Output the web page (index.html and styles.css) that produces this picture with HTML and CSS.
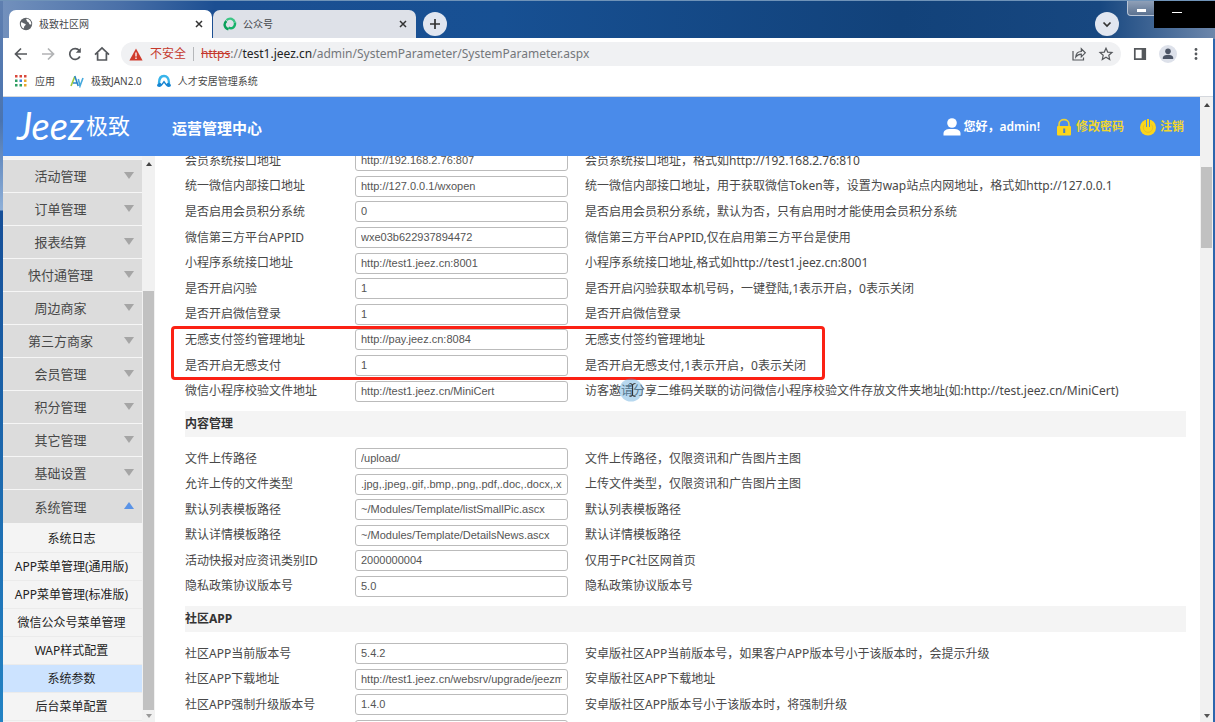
FILE: index.html
```html
<!DOCTYPE html>
<html lang="zh-CN">
<head>
<meta charset="utf-8">
<title>极致社区网</title>
<link rel="stylesheet" href="styles.css">
</head>
<body>
<div class="window">
  <div class="tabstrip">
    <div class="tab tab-active">
      <svg class="tab-icon" viewBox="0 0 14 14"><circle cx="7" cy="7" r="6.2" fill="#5f6368"/><path d="M2 5.2c2 .3 2.600 1.200 4 1.500 1.200.4.8 1.600-.2 2-.9.5-.5 2.300-1.400 2.900C2.500 10.500 1.500 8 2 5.200zM7.500 1.800c-.9 1 .3 1.300.5 2.200.2 1.200 1.900 1 2 2.300.2 1.100 1 1.500 2.300 1.200C12.600 4.200 10 1.700 7.500 1.800z" fill="#fff"/></svg>
      <span class="tab-title">极致社区网</span>
      <button class="tab-close" aria-label="关闭"><svg viewBox="0 0 8 8"><path d="M1 1l6 6M7 1L1 7"/></svg></button>
    </div>
    <div class="tab">
      <svg class="tab-icon" viewBox="0 0 14 14" fill="none" stroke-width="2.400"><path d="M5.500 12.300C1 11 .5 6.500 3.500 4" stroke="#0aa05a"/><path d="M3.500 3.200C7 .2 11 2 11.800 5.500" stroke="#3cc585"/><path d="M12 5.500C12.500 10 9 12.500 5.500 10.500" stroke="#17b26a"/></svg>
      <span class="tab-title">公众号</span>
      <button class="tab-close" aria-label="关闭"><svg viewBox="0 0 8 8"><path d="M1 1l6 6M7 1L1 7"/></svg></button>
    </div>
    <button class="round new-tab" aria-label="新标签页"><svg viewBox="0 0 12 12"><path d="M6 1v10M1 6h10"/></svg></button>
    <button class="round tab-search" aria-label="搜索标签页"><svg viewBox="0 0 12 12"><path d="M2.500 4.500L6 8l3.500-3.500"/></svg></button>
    <button class="win-min" aria-label="最小化"><span class="win-dash"></span></button>
  </div>

  <div class="toolbar">
    <button class="tool" aria-label="后退"><svg viewBox="0 0 16 16"><path d="M14 8H3M8 2.500L2.500 8 8 13.500"/></svg></button>
    <button class="tool tool-off" aria-label="前进"><svg viewBox="0 0 16 16"><path d="M2 8h11M8 2.500L13.500 8 8 13.500"/></svg></button>
    <button class="tool" aria-label="刷新"><svg viewBox="0 0 16 16"><path d="M12.900 10.500A5.400 5.400 0 1 1 12.300 4.500"/><path d="M13.800 1.800v5H8.800z" fill="#55585c" stroke="none"/></svg></button>
    <button class="tool" aria-label="主页"><svg viewBox="0 0 16 16"><path d="M1 8.600L8 2l7 6.600M3.600 7v7h8.800V7"/></svg></button>
    <div class="address">
      <svg class="warn" viewBox="0 0 14 13"><path d="M7 .6L13.600 12.400H.4z" fill="#d03b2c"/><path d="M7 4.600v3.800M7 9.400v1.500" stroke="#fff" stroke-width="1.300"/></svg>
      <span class="unsafe">不安全</span>
      <span class="sep"></span>
      <span class="url"><s class="scheme">https</s>://<b class="host">test1.jeez.cn</b>/admin/SystemParameter/SystemParameter.aspx</span>
      <button class="tool" aria-label="分享"><svg viewBox="0 0 16 16" class="thin"><path d="M2 5v9h10.500v-2.500M4.800 11C5 7.500 7 5.500 10.300 5.500V2.800l4 4-4 4V8.200C8 8.200 6.300 9 4.800 11z"/></svg></button>
      <button class="tool" aria-label="收藏"><svg viewBox="0 0 16 16" class="thin"><path d="M8 2.200l1.700 3.900 4.300.4-3.200 2.800.9 4.200L8 11.300l-3.700 2.200.9-4.200L2 6.500l4.300-.4z"/></svg></button>
    </div>
    <button class="tool panel" aria-label="侧边栏"><svg viewBox="0 0 16 16"><path d="M2.800 2.800h10.400v10.400H2.800z"/><path d="M10.500 2.800h2.700v10.400h-2.700z" fill="#55585c"/></svg></button>
    <button class="tool avatar" aria-label="用户"><svg viewBox="0 0 18 18"><circle cx="9" cy="6.200" r="2.800"/><path d="M3.800 14v-1.300c0-2 2.600-3 5.200-3s5.200 1 5.200 3V14z"/></svg></button>
    <button class="tool" aria-label="菜单"><svg viewBox="0 0 16 16"><g fill="#55585c" stroke="none"><circle cx="8" cy="3.500" r="1.400"/><circle cx="8" cy="8" r="1.400"/><circle cx="8" cy="12.500" r="1.400"/></g></svg></button>
  </div>

  <nav class="bookmarks">
    <a class="bookmark" href="#"><svg class="bm-icon" viewBox="0 0 14 14"><path d="M1 1h2.500v2.500H1zM5.500 1H8v2.500H5.500zM10 1h2.500v2.500H10z" fill="#d9473a"/><path d="M1 5.500h2.500V8H1zM1 10h2.500v2.500H1zM5.500 10H8v2.500H5.500z" fill="#2f9e62"/><path d="M5.500 5.500H8V8H5.500z" fill="#3b7de0"/><path d="M10 5.500h2.500V8H10zM10 10h2.500v2.500H10z" fill="#e8a72c"/></svg>应用</a>
    <a class="bookmark" href="#"><svg class="bm-icon" viewBox="0 0 14 14" fill="none" stroke-width="1.600"><path d="M1 12L4.800 2.500" stroke="#9cc83c"/><path d="M4.800 2l3.400 10M3 9h4" stroke="#2a86c8"/><path d="M8.300 5l1.700 7 3-8" stroke="#45a9dd"/></svg>极致JAN2.0</a>
    <a class="bookmark" href="#"><svg class="bm-icon" viewBox="0 0 14 14" fill="none"><path d="M2 9C2 4 4.500 2 7 2s5 2 5 7" stroke="#38b4ea" stroke-width="2.400"/><path d="M0 12c.5-3.500 3-4 4.500-2L7 6.500 9.500 10c1.500-2 4-1.500 4.500 2-2 1.500-4 1-5-.5L7 9l-2 2.500C4 13 2 13.500 0 12z" fill="#1685d2"/></svg>人才安居管理系统</a>
  </nav>

  <div class="viewport">
    <div class="app">
      <header class="header">
        <div class="logo"><span class="logo-en">Jeez</span><span class="logo-cn">极致</span></div>
        <h1 class="title">运营管理中心</h1>
        <div class="user">
          <span class="user-item"><svg class="u-icon" viewBox="0 0 18 18"><circle cx="9" cy="5" r="4.800" fill="#fff"/><path d="M.5 17.500v-2c0-3 3-4.300 5.300-4.500h6.400c2.300.2 5.300 1.500 5.300 4.500v2z" fill="#fff"/></svg>您好，admin!</span>
          <a class="user-item user-link" href="#"><svg class="u-icon" viewBox="0 0 18 18"><path d="M4 8V6.500C4 0 14 0 14 6.500V8" fill="none" stroke="#e8d03c" stroke-width="1.600"/><rect x="2" y="8" width="14" height="9.500" rx="1" fill="#fbd51c"/><path d="M8.200 10.500h2v4.500h-2z" fill="#4d7fbd"/></svg>修改密码</a>
          <a class="user-item user-link" href="#"><svg class="u-icon" viewBox="0 0 18 18"><circle cx="9" cy="9.500" r="8" fill="#fbd51c"/><path d="M9 1v8" stroke="#4a8bea" stroke-width="4"/><path d="M9 1v8" stroke="#fbd51c" stroke-width="2"/><path d="M5.500 6.500a4.700 4.700 0 1 0 7 0" fill="none" stroke="#e4c12a" stroke-width="1"/></svg>注销</a>
        </div>
      </header>

      <div class="main">
        <nav class="sidebar">
          <div class="menu">
            <button class="menu-item">活动管理</button>
            <button class="menu-item">订单管理</button>
            <button class="menu-item">报表结算</button>
            <button class="menu-item">快付通管理</button>
            <button class="menu-item">周边商家</button>
            <button class="menu-item">第三方商家</button>
            <button class="menu-item">会员管理</button>
            <button class="menu-item">积分管理</button>
            <button class="menu-item">其它管理</button>
            <button class="menu-item">基础设置</button>
            <button class="menu-item menu-open">系统管理</button>
          </div>
          <div class="submenu">
            <a class="sub-item" href="#">系统日志</a>
            <a class="sub-item" href="#">APP菜单管理(通用版)</a>
            <a class="sub-item" href="#">APP菜单管理(标准版)</a>
            <a class="sub-item" href="#">微信公众号菜单管理</a>
            <a class="sub-item" href="#">WAP样式配置</a>
            <a class="sub-item sub-active" href="#">系统参数</a>
            <a class="sub-item" href="#">后台菜单配置</a>
          </div>
        </nav>
        <div class="scroll scroll-side"><span class="arrow arrow-up"></span><span class="thumb"></span><span class="arrow arrow-down arrow-dim"></span></div>

        <form class="content">
          <div class="group group-ten">
            <div class="row"><label for="f1">会员系统接口地址</label><input id="f1" value="http://192.168.2.76:807"><span>会员系统接口地址，格式如http://192.168.2.76:810</span></div>
            <div class="row"><label for="f2">统一微信内部接口地址</label><input id="f2" value="http://127.0.0.1/wxopen"><span>统一微信内部接口地址，用于获取微信Token等，设置为wap站点内网地址，格式如http://127.0.0.1</span></div>
            <div class="row"><label for="f3">是否启用会员积分系统</label><input id="f3" value="0"><span>是否启用会员积分系统，默认为否，只有启用时才能使用会员积分系统</span></div>
            <div class="row"><label for="f4">微信第三方平台APPID</label><input id="f4" value="wxe03b622937894472"><span>微信第三方平台APPID,仅在启用第三方平台是使用</span></div>
            <div class="row"><label for="f5">小程序系统接口地址</label><input id="f5" value="http://test1.jeez.cn:8001"><span>小程序系统接口地址,格式如http://test1.jeez.cn:8001</span></div>
            <div class="row"><label for="f6">是否开启闪验</label><input id="f6" value="1"><span>是否开启闪验获取本机号码，一键登陆,1表示开启，0表示关闭</span></div>
            <div class="row"><label for="f7">是否开启微信登录</label><input id="f7" value="1"><span>是否开启微信登录</span></div>
            <div class="row"><label for="f8">无感支付签约管理地址</label><input id="f8" value="http://pay.jeez.cn:8084"><span>无感支付签约管理地址</span></div>
            <div class="row"><label for="f9">是否开启无感支付</label><input id="f9" value="1"><span>是否开启无感支付,1表示开启，0表示关闭</span></div>
            <div class="row"><label for="f10">微信小程序校验文件地址</label><input id="f10" value="http://test1.jeez.cn/MiniCert"><span>访客邀请分享二维码关联的访问微信小程序校验文件存放文件夹地址(如:http://test.jeez.cn/MiniCert)</span></div>
            <div class="marker"></div>
            <svg class="pointer" viewBox="0 0 24 24"><circle cx="12" cy="12" r="11.500" fill="#5fa8dc" fill-opacity=".45"/><path d="M10.500 5.500c1.500 0 2.500.5 3 1.500.5-1 1.500-1.500 3-1.500M13.500 7v10M10.500 18.500c1.500 0 2.500-.5 3-1.500.5 1 1.500 1.500 3 1.500" fill="none" stroke="#333" stroke-width="1.200"/></svg>
          </div>
          <h2 class="section">内容管理</h2>
          <div class="group group-six">
            <div class="row"><label for="g1">文件上传路径</label><input id="g1" value="/upload/"><span>文件上传路径，仅限资讯和广告图片主图</span></div>
            <div class="row"><label for="g2">允许上传的文件类型</label><input id="g2" value=".jpg,.jpeg,.gif,.bmp,.png,.pdf,.doc,.docx,.xls,.xlsx"><span>上传文件类型，仅限资讯和广告图片主图</span></div>
            <div class="row"><label for="g3">默认列表模板路径</label><input id="g3" value="~/Modules/Template/listSmallPic.ascx"><span>默认列表模板路径</span></div>
            <div class="row"><label for="g4">默认详情模板路径</label><input id="g4" value="~/Modules/Template/DetailsNews.ascx"><span>默认详情模板路径</span></div>
            <div class="row"><label for="g5">活动快报对应资讯类别ID</label><input id="g5" value="2000000004"><span>仅用于PC社区网首页</span></div>
            <div class="row"><label for="g6">隐私政策协议版本号</label><input id="g6" value="5.0"><span>隐私政策协议版本号</span></div>
          </div>
          <h2 class="section">社区APP</h2>
          <div class="group group-four">
            <div class="row"><label for="h1">社区APP当前版本号</label><input id="h1" value="5.4.2"><span>安卓版社区APP当前版本号，如果客户APP版本号小于该版本时，会提示升级</span></div>
            <div class="row"><label for="h2">社区APP下载地址</label><input id="h2" value="http://test1.jeez.cn/websrv/upgrade/jeezmobile.apk"><span>安卓版社区APP下载地址</span></div>
            <div class="row"><label for="h3">社区APP强制升级版本号</label><input id="h3" value="1.4.0"><span>安卓版社区APP版本号小于该版本时，将强制升级</span></div>
            <div class="row"><span></span><input aria-label="升级说明"><span></span></div>
          </div>
        </form>
      </div>
    </div>
    <div class="scroll scroll-page"><span class="arrow arrow-up"></span><span class="thumb"></span><span class="arrow arrow-down"></span></div>
  </div>
  <div class="overlay"><span class="overlay-dash"></span></div>
</div>
</body>
</html>
```
FILE: styles.css
```css
* { box-sizing: border-box; }

body {
  margin: 0;
  font: 12px/20px "Noto Sans", "Noto Sans CJK SC", sans-serif;
  color: #484848;
}

button {
  border: 0;
  padding: 0;
  background: none;
  font: inherit;
  color: inherit;
}

a { color: inherit; text-decoration: none; }
svg { display: block; }

.window {
  position: relative;
  display: flex;
  flex-direction: column;
  height: 100vh;
  overflow: hidden;
  padding: 0 2px 0 3px;
  border-top: 1px solid #6f93b8;
  background:
    linear-gradient(#5f7fb0 0, #4a74b0 120px, #8fb0d8 209px, #164f98 210px, #2383c4 100%) left / 3px 100% no-repeat,
    linear-gradient(90deg, #7391bd 0, #4a70a8 120px, #1c4f92 215px, #175093 500px, #12427a 900px, #174780 1100px, #6d87ab 100%) top / 100% 38px no-repeat,
    #2c66ad;
}

/* Browser tabs */
.tabstrip {
  display: flex;
  align-items: center;
  gap: 1px;
  height: 37px;
  padding: 0 58px 0 6px;
}

.tab {
  display: flex;
  align-items: center;
  align-self: flex-end;
  width: 203px;
  height: 28px;
  padding: 0 9px 0 10px;
  border-radius: 7px 7px 0 0;
  background: #dee1e8;
}

.tab-active { background: #fff; }
.tab-icon { width: 14px; height: 14px; margin-right: 6px; }
.tab-title { flex: 1; font-size: 10px; color: #45484c; }
.tab-close svg { width: 8px; height: 8px; stroke: #333; stroke-width: 1.5; }

.round {
  display: grid;
  place-items: center;
  width: 24px;
  height: 24px;
  margin-top: 9px;
  border-radius: 50%;
  background: #e1e6f0;
}

.round svg { width: 12px; height: 12px; fill: none; stroke: #333; stroke-width: 1.7; }
.new-tab { margin-left: 6px; }
.tab-search { margin-left: auto; }

.win-min {
  display: grid;
  place-items: center;
  align-self: flex-start;
  width: 28px;
  height: 15px;
  margin-left: 7px;
  border: 1px solid #b9c5d6;
  border-top: 0;
  border-radius: 0 0 0 4px;
  background: linear-gradient(#8fa0b8, #5c7290);
}

.win-dash { width: 9px; height: 3px; margin-top: 4px; background: #fff; }

.overlay {
  position: absolute;
  top: -1px;
  right: 0;
  display: grid;
  place-items: center;
  width: 61px;
  height: 28px;
  padding: 0 16px 3px 0;
  background: #000;
}

.overlay-dash { width: 10px; height: 1px; background: #fff; }

/* Address bar */
.toolbar {
  display: flex;
  align-items: center;
  gap: 11px;
  height: 32px;
  padding: 0 9px 0 10px;
  background: #fff;
}

.tool { display: grid; place-items: center; width: 16px; height: 16px; }
.tool svg { width: 16px; height: 16px; fill: none; stroke: #55585c; stroke-width: 1.7; }
.tool svg.thin { stroke-width: 1.2; }
.tool-off { opacity: .45; }

.address {
  display: flex;
  flex: 1;
  align-items: center;
  gap: 7px;
  height: 24px;
  padding: 0 7px 0 8px;
  border-radius: 12px;
  background: #f0f1f3;
}

.address .tool { margin-left: 4px; }
.warn { width: 14px; height: 13px; }
.unsafe { color: #c5392d; }
.sep { width: 1px; height: 14px; background: #b5b7ba; }
.url { flex: 1; white-space: nowrap; color: #74777b; }
.scheme { color: #c5392d; }
.host { font-weight: 400; color: #222; }
.avatar { width: 18px; height: 18px; border-radius: 50%; background: #dde1ea; }
.toolbar .avatar svg { width: 18px; height: 18px; fill: #4c5566; stroke: none; }

.bookmarks {
  display: flex;
  gap: 15px;
  height: 27px;
  padding: 1px 11px 5px;
  border-bottom: 1px solid #d5d8dd;
  background: #fff;
  font-size: 10px;
}

.bookmark { display: flex; align-items: center; gap: 7px; }
.bm-icon { width: 14px; height: 14px; }

/* Page */
.viewport { display: flex; flex: 1; min-height: 0; background: #fff; }
.app { display: flex; flex: 1; flex-direction: column; min-width: 0; }

.header {
  display: flex;
  align-items: center;
  height: 59px;
  padding: 0 16px 0 14px;
  background: #4a8bea;
  color: #fff;
}

.logo { display: flex; align-items: center; gap: 2px; width: 155px; }
.logo-en { font: italic 400 38px/38px Lato, sans-serif; padding-bottom: 4px; }
.logo-cn { font-size: 22px; line-height: 32px; padding-bottom: 4px; }
.title { flex: 1; margin: 0; font-size: 15px; line-height: 24px; padding-top: 2px; }
.user { display: flex; gap: 15px; padding-top: 1px; font-weight: 600; }
.user-item { display: flex; align-items: center; gap: 3px; }
.user-link { color: #f0d62e; }
.u-icon { width: 18px; height: 18px; }

.main { display: flex; flex: 1; min-height: 0; overflow: hidden; }

.sidebar { width: 139px; padding-top: 3px; background: #f4f4f4; overflow: hidden; }

.menu-item {
  display: flex;
  align-items: center;
  justify-content: center;
  position: relative;
  width: 100%;
  height: 33px;
  padding-right: 24px;
  border-top: 1px solid #f6f6f6;
  background: #dcdcdc;
  font-size: 13px;
}

.menu-item::after {
  content: "";
  position: absolute;
  top: 12px;
  right: 8px;
  border: 5px solid transparent;
  border-top: 7px solid #a5a5a5;
  border-bottom: 0;
}

.menu-open { height: 34px; }
.menu-open::after { border-top: 0; border-bottom: 7px solid #5a93e6; }

.submenu { padding-top: 2px; }

.sub-item {
  display: block;
  height: 28px;
  padding-right: 2px;
  border-bottom: 1px solid #ebebeb;
  line-height: 28px;
  text-align: center;
  white-space: nowrap;
  color: #222;
}

.sub-active { background: #cce3ff; }

.scroll {
  display: flex;
  flex-direction: column;
  align-items: center;
  flex: none;
  width: 13px;
  padding: 6px 0 4px;
  background: #f1f1f1;
}

.scroll .thumb { width: 11px; background: #c1c1c1; }
.arrow { border: 3px solid transparent; }
.arrow-up { border-top: 0; border-bottom: 4px solid #444; }
.arrow-down { border-bottom: 0; border-top: 4px solid #555; }
.arrow-dim { border-top-color: #999; }
.scroll-side .thumb { flex: 1; margin: 125px 0 4px; }
.scroll-page .thumb { height: 81px; margin-top: 60px; margin-bottom: auto; }

.content {
  flex: 1;
  min-width: 0;
  padding: 0 14px 0 30px;
  overflow: hidden;
}

.group { display: grid; position: relative; grid-auto-rows: 1fr; }
.group-ten { height: 256px; margin-top: -8px; }
.group-six { height: 153px; }
.group-four { height: 102px; }

.row {
  display: grid;
  grid-template-columns: 153px 213px 1fr;
  column-gap: 17px;
  align-items: center;
  white-space: nowrap;
}

.row input {
  width: 100%;
  height: 21px;
  padding: 0 5px 1px;
  border: 1px solid #bbb;
  border-radius: 3px;
  background: #fff;
  font: 11px "Liberation Sans", sans-serif;
  color: #555;
}

.section {
  height: 26px;
  margin: 7px 0 9px;
  background: #f4f4f4;
  font-size: 12px;
  line-height: 26px;
  color: #333;
}

.marker {
  position: absolute;
  top: 178px;
  left: -14px;
  width: 654px;
  height: 54px;
  border: 3px solid #fb2114;
  border-radius: 4px;
}

.pointer { position: absolute; top: 230px; left: 434px; width: 24px; height: 24px; }
```
